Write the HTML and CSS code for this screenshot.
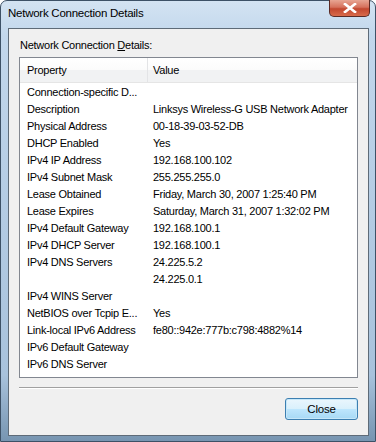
FILE: index.html
```html
<!DOCTYPE html>
<html>
<head>
<meta charset="utf-8">
<link rel="stylesheet" href="styles.css">
</head>
<body>
<div class="window">
  <div class="titlebar">
    <span class="title">Network Connection Details</span>
    <div class="close-x"><svg width="14" height="10" viewBox="0 0 14 10"><path d="M2 1 L12 9 M12 1 L2 9" stroke="#fff" stroke-width="2.6" stroke-linecap="square"/></svg></div>
  </div>
  <div class="client">
    <div class="label">Network Connection <u>D</u>etails:</div>
    <div class="listview">
      <div class="header">
        <div class="hcell prop">Property</div>
        <div class="hcell val">Value</div>
      </div>
      <div class="rows">
        <div class="row"><span class="p">Connection-specific D...</span><span class="v"></span></div>
        <div class="row"><span class="p">Description</span><span class="v">Linksys Wireless-G USB Network Adapter</span></div>
        <div class="row"><span class="p">Physical Address</span><span class="v">00-18-39-03-52-DB</span></div>
        <div class="row"><span class="p">DHCP Enabled</span><span class="v">Yes</span></div>
        <div class="row"><span class="p">IPv4 IP Address</span><span class="v">192.168.100.102</span></div>
        <div class="row"><span class="p">IPv4 Subnet Mask</span><span class="v">255.255.255.0</span></div>
        <div class="row"><span class="p">Lease Obtained</span><span class="v">Friday, March 30, 2007 1:25:40 PM</span></div>
        <div class="row"><span class="p">Lease Expires</span><span class="v">Saturday, March 31, 2007 1:32:02 PM</span></div>
        <div class="row"><span class="p">IPv4 Default Gateway</span><span class="v">192.168.100.1</span></div>
        <div class="row"><span class="p">IPv4 DHCP Server</span><span class="v">192.168.100.1</span></div>
        <div class="row"><span class="p">IPv4 DNS Servers</span><span class="v">24.225.5.2</span></div>
        <div class="row"><span class="p"></span><span class="v">24.225.0.1</span></div>
        <div class="row"><span class="p">IPv4 WINS Server</span><span class="v"></span></div>
        <div class="row"><span class="p">NetBIOS over Tcpip E...</span><span class="v">Yes</span></div>
        <div class="row"><span class="p">Link-local IPv6 Address</span><span class="v">fe80::942e:777b:c798:4882%14</span></div>
        <div class="row"><span class="p">IPv6 Default Gateway</span><span class="v"></span></div>
        <div class="row"><span class="p">IPv6 DNS Server</span><span class="v"></span></div>
      </div>
    </div>
    <div class="sep"></div>
    <div class="footer">
      <button class="btn">Close</button>
    </div>
  </div>
</div>
</body>
</html>
```

FILE: styles.css
```css
html, body {
  margin: 0;
  padding: 0;
}
body {
  width: 376px;
  height: 442px;
  overflow: hidden;
  font-family: "Liberation Sans", Arial, sans-serif;
  font-size: 11px;
  letter-spacing: -0.25px;
  color: #000;
}
.window {
  box-sizing: border-box;
  width: 376px;
  height: 442px;
  display: flex;
  flex-direction: column;
  border: 1px solid #3d5166;
  border-radius: 7px 7px 0 0;
  background: linear-gradient(180deg, #d3e3f2 0%, #c2d7ec 8%, #b3cbe3 50%, #a8c2dc 85%, #7795b1 100%);
  padding: 0 6px 5px 7px;
}
.titlebar {
  height: 27px;
  display: flex;
  align-items: flex-start;
  justify-content: space-between;
  flex-shrink: 0;
}
.title {
  margin-top: 6px;
  font-size: 11.5px;
  color: #000;
  letter-spacing: -0.25px;
}
.close-x {
  width: 41px;
  height: 17px;
  margin-top: -1px;
  margin-right: -1px;
  box-sizing: border-box;
  border: 1px solid #5a2a25;
  border-top: none;
  border-radius: 0 0 5px 5px;
  background: linear-gradient(180deg, #e8a593 0%, #d6715c 45%, #c2472f 55%, #d86b4b 100%);
  display: flex;
  align-items: center;
  justify-content: center;
}
.client {
  flex: 1;
  box-sizing: border-box;
  border: 1px solid #5e6b78;
  background: #f0f0f0;
  padding: 9px 10px 15px 10px;
  display: flex;
  flex-direction: column;
}
.label {
  margin-left: 1px;
  height: 15px;
  line-height: 15px;
  margin-bottom: 4px;
}
.listview {
  height: 321px;
  box-sizing: border-box;
  border: 1px solid #828790;
  background: #fff;
  display: flex;
  flex-direction: column;
}
.header {
  height: 24px;
  display: flex;
  background: linear-gradient(180deg, #ffffff 0%, #fbfbfb 50%, #f1f2f3 51%, #f1f2f3 100%);
  border-bottom: 1px solid #e5e5e5;
  flex-shrink: 0;
}
.hcell {
  line-height: 24px;
  padding-left: 7px;
}
.hcell.prop {
  width: 120px;
  border-right: 1px solid #e3e4e6;
}
.hcell.val {
  padding-left: 5px;
}
.rows {
  padding-top: 1px;
}
.row {
  height: 17px;
  line-height: 17px;
  display: flex;
  white-space: nowrap;
}
.row .p {
  width: 126px;
  padding-left: 7px;
  flex-shrink: 0;
}
.sep {
  margin-top: 9px;
  height: 1px;
  background: #a0a0a0;
  border-bottom: 1px solid #ffffff;
}
.footer {
  display: flex;
  justify-content: flex-end;
  margin-top: 9px;
}
.btn {
  width: 73px;
  height: 22px;
  box-sizing: border-box;
  border: 1px solid #3c7fb1;
  border-radius: 3px;
  background: linear-gradient(180deg, #eaf6fd 0%, #d9f0fc 50%, #bee6fd 51%, #a7d9f5 100%);
  box-shadow: inset 0 0 0 1px #c6e7f9;
  font-family: "Liberation Sans", Arial, sans-serif;
  font-size: 11.5px;
  letter-spacing: -0.2px;
  color: #000;
  padding: 0;
}
```
